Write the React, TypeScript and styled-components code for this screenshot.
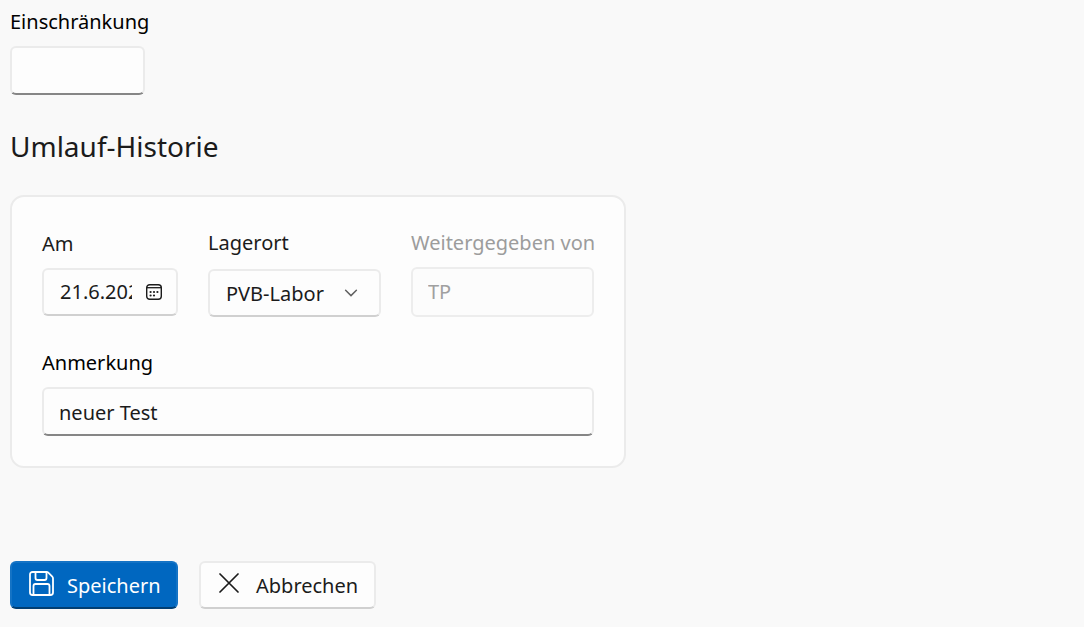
import React, { useState } from "react";
import styled, { createGlobalStyle, css } from "styled-components";

const GlobalStyle = createGlobalStyle`
  *, *::before, *::after { box-sizing: border-box; }
  body {
    margin: 0;
    background: #f9f9f9;
    color: #1b1b1b;
    font: 20px/28px "Segoe UI", "Noto Sans", "Open Sans", sans-serif;
  }
  input, select, button { font: inherit; color: inherit; }
`;

const frame = css`
  border: 2px solid #ebebeb;
  border-radius: 6px;
  background: #fdfdfd;
`;

const Page = styled.form`
  padding: 8px 10px 18px;
`;

const Field = styled.div<{ $width?: number; $gap?: number }>`
  display: flex;
  flex-direction: column;
  gap: ${(p) => p.$gap ?? 10}px;
  width: ${(p) => (p.$width ? `${p.$width}px` : "auto")};
`;

const Label = styled.label<{ $tone?: string }>`
  color: ${(p) => p.$tone ?? "#1b1b1b"};
  white-space: nowrap;
`;

const TextInput = styled.input`
  ${frame}
  width: 100%;
  height: 49px;
  padding: 2px 15px 0;
  border-bottom-color: #868686;
  outline: none;

  &:disabled {
    height: 50px;
    padding: 0 15px 2px;
    border-color: #ededed;
    background: #fcfcfc;
    color: #a0a0a0;
  }
`;

const Heading = styled.h2`
  margin: 31px 0 29px;
  font-size: 28px;
  line-height: 40px;
  font-weight: 400;
`;

const Card = styled.section`
  width: fit-content;
  max-width: 100%;
  padding: 32px 30px 30px;
  border: 2px solid #ebebeb;
  border-radius: 14px;
  background: #fdfdfd;
`;

const FieldRow = styled.div`
  display: flex;
  align-items: center;
  gap: 30px;
  margin-bottom: 32px;
`;

const DateBox = styled.div`
  ${frame}
  display: flex;
  align-items: center;
  height: 48px;
  padding: 0 14px 0 16px;
  border-bottom-color: #d0d0d0;
`;

const DateInput = styled.input`
  flex: 1;
  min-width: 0;
  padding: 0;
  border: 0;
  background: transparent;
  outline: none;
`;

const IconButton = styled.button`
  display: flex;
  margin-left: 14px;
  padding: 0;
  border: 0;
  background: transparent;
`;

const SelectBox = styled.div`
  display: grid;
  align-items: center;

  > * { grid-area: 1 / 1; }
  > svg {
    justify-self: end;
    margin-right: 23px;
    pointer-events: none;
  }
`;

const Select = styled.select`
  ${frame}
  appearance: none;
  width: 100%;
  height: 48px;
  padding: 2px 48px 0 16px;
  border-bottom-color: #d0d0d0;
  outline: none;
`;

const Actions = styled.div`
  display: flex;
  gap: 21px;
  margin-top: 93px;
`;

const Button = styled.button<{ $primary?: boolean }>`
  ${frame}
  display: flex;
  align-items: center;
  gap: ${(p) => (p.$primary ? 13 : 17)}px;
  width: ${(p) => (p.$primary ? 168 : 177)}px;
  height: 48px;
  padding: 2px 0 0 17px;
  border-bottom-color: #d0d0d0;
  white-space: nowrap;

  > svg { margin-bottom: 6px; }

  ${(p) =>
    p.$primary &&
    css`
      border-color: #1473c5 #1473c5 #003e73;
      background: #0067c0;
      color: #fff;
    `}
`;

const CalendarIcon = () => (
  <svg width="16" height="16" viewBox="0 0 16 16" fill="none" stroke="#1b1b1b" aria-hidden="true">
    <rect x="0.7" y="0.7" width="14.6" height="14.6" rx="3" strokeWidth="1.4" />
    <path d="M1 3.7h14" strokeWidth="1.3" />
    <g fill="#1b1b1b" stroke="none">
      <circle cx="4.6" cy="8" r="1.1" />
      <circle cx="8" cy="8" r="1.1" />
      <circle cx="11.4" cy="8" r="1.1" />
      <circle cx="4.6" cy="11.5" r="1.1" />
      <circle cx="8" cy="11.5" r="1.1" />
    </g>
  </svg>
);

const ChevronIcon = () => (
  <svg width="14" height="8" viewBox="0 0 14 8" fill="none" stroke="#606060" strokeWidth="1.5" strokeLinecap="round" aria-hidden="true">
    <path d="M1.6 1.3 7 6.6l5.4-5.3" />
  </svg>
);

const SaveIcon = () => (
  <svg width="25" height="25" viewBox="0 0 25 25" fill="none" stroke="currentColor" strokeWidth="1.8" strokeLinejoin="round" aria-hidden="true">
    <path d="M3.5 1H17.5a2.5 2.5 0 0 1 1.8.7l4 4a2.5 2.5 0 0 1 .7 1.8V21.5a2.5 2.5 0 0 1-2.5 2.5h-18A2.5 2.5 0 0 1 1 21.5V3.5A2.5 2.5 0 0 1 3.5 1Z" />
    <path d="M6.5 1v6A2 2 0 0 0 8.5 9h7a2 2 0 0 0 2-2V1M4.5 24v-9a2 2 0 0 1 2-2h12a2 2 0 0 1 2 2v9" />
  </svg>
);

const CloseIcon = () => (
  <svg width="21" height="20" viewBox="0 0 21 20" fill="none" stroke="#1b1b1b" strokeWidth="1.7" strokeLinecap="round" aria-hidden="true">
    <path d="m2 1 18 18M20 1 2 19" />
  </svg>
);

export default function App() {
  const [restriction, setRestriction] = useState("");
  const [date, setDate] = useState("21.6.2024");
  const [note, setNote] = useState("neuer Test");

  return (
    <>
      <GlobalStyle />
      <Page onSubmit={(e) => e.preventDefault()}>
        <Field $width={135}>
          <Label htmlFor="restriction" $tone="#000">Einschränkung</Label>
          <TextInput id="restriction" value={restriction} onChange={(e) => setRestriction(e.target.value)} />
        </Field>

        <Heading>Umlauf-Historie</Heading>

        <Card>
          <FieldRow>
            <Field $width={136}>
              <Label htmlFor="date">Am</Label>
              <DateBox>
                <DateInput id="date" value={date} onChange={(e) => setDate(e.target.value)} />
                <IconButton type="button" aria-label="Kalender">
                  <CalendarIcon />
                </IconButton>
              </DateBox>
            </Field>
            <Field $width={173} $gap={12}>
              <Label htmlFor="location">Lagerort</Label>
              <SelectBox>
                <Select id="location" defaultValue="PVB-Labor">
                  <option>PVB-Labor</option>
                </Select>
                <ChevronIcon />
              </SelectBox>
            </Field>
            <Field $width={183}>
              <Label htmlFor="passedBy" $tone="#9c9c9c">Weitergegeben von</Label>
              <TextInput id="passedBy" value="TP" disabled />
            </Field>
          </FieldRow>
          <Field>
            <Label htmlFor="note" $tone="#000">Anmerkung</Label>
            <TextInput id="note" value={note} onChange={(e) => setNote(e.target.value)} />
          </Field>
        </Card>

        <Actions>
          <Button type="submit" $primary>
            <SaveIcon />
            Speichern
          </Button>
          <Button type="button">
            <CloseIcon />
            Abbrechen
          </Button>
        </Actions>
      </Page>
    </>
  );
}
